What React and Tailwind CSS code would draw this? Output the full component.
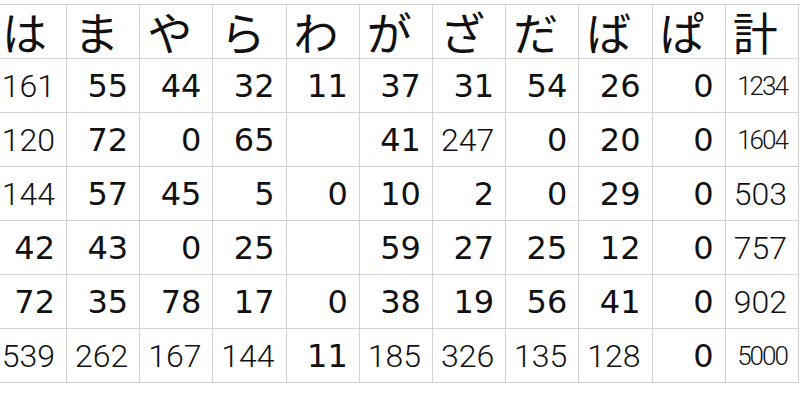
const heads = ["は", "ま", "や", "ら", "わ", "が", "ざ", "だ", "ば", "ぱ", "計"];

// b = big digits, t = thin, s = small narrow
const rows = [
  [["161", "t"], ["55", "b"], ["44", "b"], ["32", "b"], ["11", "b"], ["37", "b"], ["31", "b"], ["54", "b"], ["26", "b"], ["0", "b"], ["1234", "s"]],
  [["120", "t"], ["72", "b"], ["0", "b"], ["65", "b"], ["", "b"], ["41", "b"], ["247", "t"], ["0", "b"], ["20", "b"], ["0", "b"], ["1604", "s"]],
  [["144", "t"], ["57", "b"], ["45", "b"], ["5", "b"], ["0", "b"], ["10", "b"], ["2", "b"], ["0", "b"], ["29", "b"], ["0", "b"], ["503", "t"]],
  [["42", "b"], ["43", "b"], ["0", "b"], ["25", "b"], ["", "b"], ["59", "b"], ["27", "b"], ["25", "b"], ["12", "b"], ["0", "b"], ["757", "t"]],
  [["72", "b"], ["35", "b"], ["78", "b"], ["17", "b"], ["0", "b"], ["38", "b"], ["19", "b"], ["56", "b"], ["41", "b"], ["0", "b"], ["902", "t"]],
  [["539", "t"], ["262", "t"], ["167", "t"], ["144", "t"], ["11", "b"], ["185", "t"], ["326", "t"], ["135", "t"], ["128", "t"], ["0", "b"], ["5000", "s"]],
];

const styles = {
  b: "text-[32px] font-normal font-['DejaVu_Sans',sans-serif]",
  t: "text-[32px] font-light font-['Roboto',sans-serif]",
  s: "text-[26px] font-light tracking-[-2px] font-['Roboto',sans-serif]",
};

export default function App() {
  return (
    <div className="w-[800px] h-[418px] bg-white overflow-hidden text-[#111]">
      <div className="mt-[4px] grid grid-cols-[67px_repeat(10,73.2px)] auto-rows-[54px] border-t border-[#d2d2d2]">
        {heads.map((h, i) => (
          <div
            key={h}
            className={`flex items-center border-r border-b border-[#d2d2d2] text-[45px] leading-none font-['Noto_Sans_CJK_JP',sans-serif] ${i === 0 ? "pl-[2px]" : "pl-[7px]"}`}
          >
            {h}
          </div>
        ))}
        {rows.map((r, ri) =>
          r.map(([v, k], ci) => (
            <div
              key={ri + "-" + ci}
              className={`flex items-center justify-end pr-[11px] border-r border-b border-[#d2d2d2] leading-none ${styles[k]}`}
            >
              {v}
            </div>
          ))
        )}
      </div>
    </div>
  );
}
